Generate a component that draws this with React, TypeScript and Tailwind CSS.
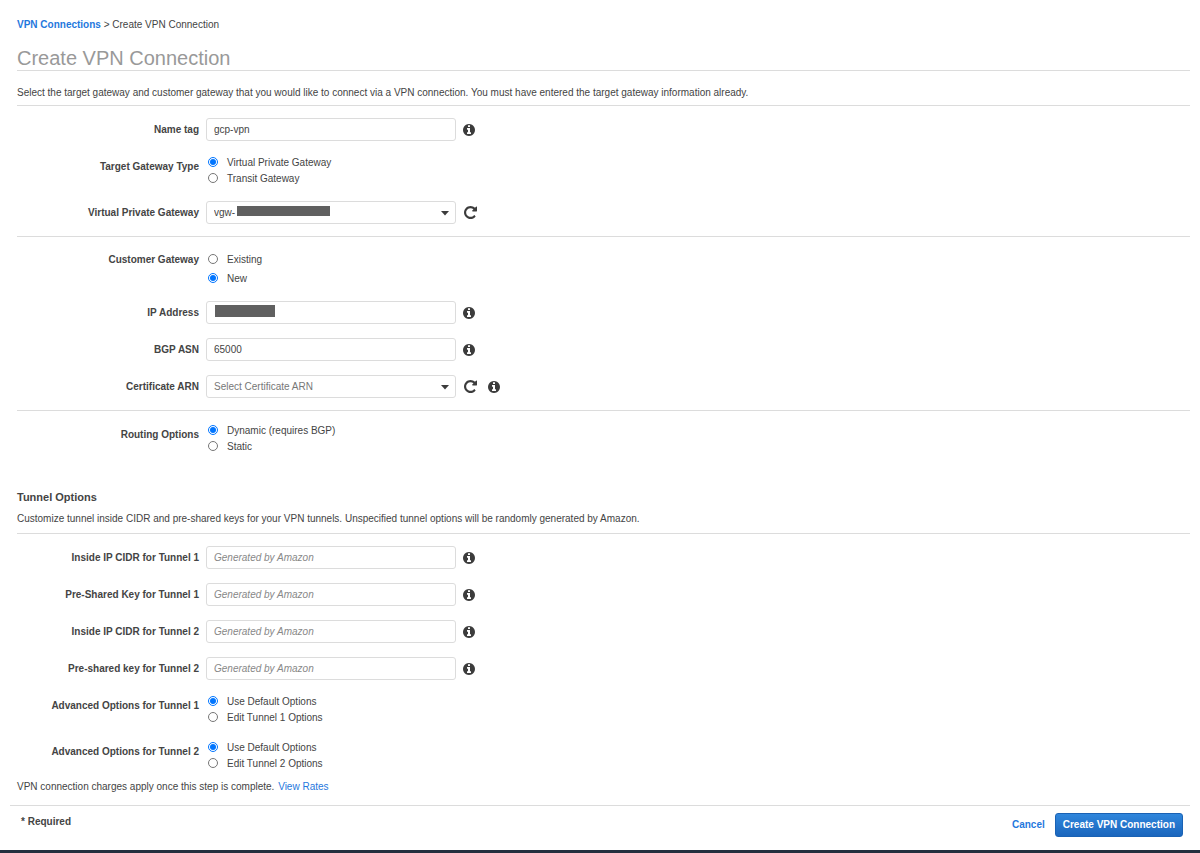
import React, { useState } from 'react'

interface RowProps {
  label: string;
  htmlFor: string;
  children: React.ReactNode;
}

interface RadioGroupProps {
  name: string;
  label: string;
  options: string[];
  initial: string;
  loose?: boolean;
}

interface TextRowProps {
  id: string;
  label: string;
  value?: string;
  placeholder?: string;
  redacted?: boolean;
}

interface SelectRowProps {
  id: string;
  label: string;
  option: string;
  muted?: boolean;
  redacted?: boolean;
  info?: boolean;
}

const fieldClass =
  'h-[23px] w-full rounded-[3px] border border-[#dcdcdc] bg-white px-[7px] text-[10px] outline-none focus:border-[#1f78dd] placeholder:italic placeholder:text-[#888]'

function InfoButton({ label }: { label: string }) {
  return (
    <button type="button" aria-label={`About ${label}`} className="text-[#3c3c3c]">
      <svg viewBox="0 128 1536 1536" className="size-3" fill="currentColor" aria-hidden="true">
        <path d="M1024 1376v-160q0-14-9-23t-23-9h-96v-512q0-14-9-23t-23-9h-320q-14 0-23 9t-9 23v160q0 14 9 23t23 9h96v320h-96q-14 0-23 9t-9 23v160q0 14 9 23t23 9h448q14 0 23-9t9-23zm-128-896v-160q0-14-9-23t-23-9h-192q-14 0-23 9t-9 23v160q0 14 9 23t23 9h192q14 0 23-9t9-23zm640 416q0 209-103 385.5t-279.5 279.5-385.5 103-385.5-103-279.5-279.5-103-385.5 103-385.5 279.5-279.5 385.5-103 385.5 103 279.5 279.5 103 385.5z" />
      </svg>
    </button>
  )
}

function RefreshButton({ label }: { label: string }) {
  return (
    <button type="button" aria-label={`Refresh ${label}`} className="ml-px mr-1 text-[#3c3c3c]">
      <svg viewBox="0 128 1536 1536" className="size-[13px]" fill="currentColor" aria-hidden="true">
        <path d="M1536 256v448q0 26-19 45t-45 19h-448q-42 0-59-40-17-39 14-69l138-138q-148-137-349-137-104 0-198.5 40.5t-163.5 109.5-109.5 163.5-40.5 198.5 40.5 198.5 109.5 163.5 163.5 109.5 198.5 40.5q119 0 225-52t179-147q7-10 23-12 14 0 25 9l137 138q9 8 9.5 20.5t-7.5 22.5q-109 132-264 204.5t-327 72.5q-156 0-298-61t-245-164-164-245-61-298 61-298 164-245 245-164 298-61q147 0 284.5 55.5t244.5 156.5l130-129q29-31 70-14 39 17 39 59z" />
      </svg>
    </button>
  )
}

function Row({ label, htmlFor, children }: RowProps) {
  return (
    <div className="flex items-center gap-[7px]">
      <label htmlFor={htmlFor} className="w-[182px] shrink-0 text-right font-bold">
        {label}
      </label>
      {children}
    </div>
  )
}

function TextRow({ id, label, value, placeholder, redacted }: TextRowProps) {
  return (
    <Row label={label} htmlFor={id}>
      <div className="relative w-[250px]">
        <input id={id} type="text" defaultValue={value} placeholder={placeholder} className={fieldClass} />
        {redacted && <span className="absolute left-[9px] top-1 h-3 w-[60px] bg-[#606060]" />}
      </div>
      <InfoButton label={label} />
    </Row>
  )
}

function SelectRow({ id, label, option, muted, redacted, info }: SelectRowProps) {
  return (
    <Row label={label} htmlFor={id}>
      <div className="relative w-[250px]">
        <select id={id} className={`${fieldClass} appearance-none ${muted ? 'text-[#777]' : ''}`}>
          <option>{option}</option>
        </select>
        {redacted && <span className="pointer-events-none absolute left-[31px] top-[5px] h-[10px] w-[93px] bg-[#606060]" />}
        <svg viewBox="0 0 8 5" className="pointer-events-none absolute right-[7px] top-[10px] h-[5px] w-2" fill="#3c3c3c" aria-hidden="true">
          <path d="M0 0h8L4 4.6z" />
        </svg>
      </div>
      <RefreshButton label={label} />
      {info && <InfoButton label={label} />}
    </Row>
  )
}

function RadioRow({ name, label, options, initial, loose }: RadioGroupProps) {
  const [selected, setSelected] = useState(initial)

  return (
    <div role="radiogroup" aria-labelledby={`${name}-label`} className="flex items-start gap-[9px]">
      <span id={`${name}-label`} className={`w-[182px] shrink-0 text-right font-bold ${loose ? '' : 'pt-1'}`}>
        {label}
      </span>
      <div className={`flex flex-col ${loose ? 'gap-[3px]' : ''}`}>
        {options.map((option) => (
          <label key={option} className="flex items-start gap-[9px]">
            <input
              type="radio"
              name={name}
              value={option}
              checked={selected === option}
              onChange={() => setSelected(option)}
              className="mt-[2px] size-[10px]"
            />
            {option}
          </label>
        ))}
      </div>
    </div>
  )
}

export default function App() {
  return (
    <div className="bg-white font-['Liberation_Sans',Arial,sans-serif] text-[10px] leading-4 text-[#444]">
      <main className="pl-[17px] pr-[10px] pt-[17px]">
        <nav>
          <a href="#connections" className="font-bold text-[#1f78dd]">VPN Connections</a> &gt; Create VPN Connection
        </nav>
        <h1 className="mt-[13px] border-b border-[#dcdcdc] text-[20px] leading-6 text-[#999]">Create VPN Connection</h1>
        <p className="mt-[14px] border-b border-[#dcdcdc] pb-1">
          Select the target gateway and customer gateway that you would like to connect via a VPN connection. You must have entered the target gateway information already.
        </p>

        <section className="flex flex-col gap-[14px] border-b border-[#dcdcdc] py-3">
          <TextRow id="name-tag" label="Name tag" value="gcp-vpn" />
          <RadioRow
            name="gateway-type"
            label="Target Gateway Type"
            options={['Virtual Private Gateway', 'Transit Gateway']}
            initial="Virtual Private Gateway"
          />
          <SelectRow id="vgw" label="Virtual Private Gateway" option="vgw-" redacted />
        </section>

        <section className="flex flex-col gap-[14px] border-b border-[#dcdcdc] pb-3 pt-[15px]">
          <RadioRow name="customer-gateway" label="Customer Gateway" options={['Existing', 'New']} initial="New" loose />
          <TextRow id="ip-address" label="IP Address" redacted />
          <TextRow id="bgp-asn" label="BGP ASN" value="65000" />
          <SelectRow id="certificate-arn" label="Certificate ARN" option="Select Certificate ARN" muted info />
        </section>

        <section className="pt-3">
          <RadioRow
            name="routing"
            label="Routing Options"
            options={['Dynamic (requires BGP)', 'Static']}
            initial="Dynamic (requires BGP)"
          />
        </section>

        <h2 className="mt-[34px] text-[11px] font-bold leading-4">Tunnel Options</h2>
        <p className="mt-[6px] border-b border-[#dcdcdc] pb-[6px]">
          Customize tunnel inside CIDR and pre-shared keys for your VPN tunnels. Unspecified tunnel options will be randomly generated by Amazon.
        </p>

        <section className="flex flex-col gap-[14px] pt-3">
          <TextRow id="cidr-1" label="Inside IP CIDR for Tunnel 1" placeholder="Generated by Amazon" />
          <TextRow id="psk-1" label="Pre-Shared Key for Tunnel 1" placeholder="Generated by Amazon" />
          <TextRow id="cidr-2" label="Inside IP CIDR for Tunnel 2" placeholder="Generated by Amazon" />
          <TextRow id="psk-2" label="Pre-shared key for Tunnel 2" placeholder="Generated by Amazon" />
          <RadioRow
            name="advanced-1"
            label="Advanced Options for Tunnel 1"
            options={['Use Default Options', 'Edit Tunnel 1 Options']}
            initial="Use Default Options"
          />
          <RadioRow
            name="advanced-2"
            label="Advanced Options for Tunnel 2"
            options={['Use Default Options', 'Edit Tunnel 2 Options']}
            initial="Use Default Options"
          />
        </section>

        <p className="mt-[7px]">
          VPN connection charges apply once this step is complete.{' '}
          <a href="#rates" className="ml-px text-[#1f78dd]">View Rates</a>
        </p>
      </main>

      <footer className="mx-[10px] mt-[10px] flex items-start justify-between border-t border-[#dcdcdc] pb-[13px] pl-[11px] pr-[7px] pt-[7px]">
        <p className="pt-px font-bold">* Required</p>
        <div className="flex items-center gap-[10px] font-bold">
          <button type="button" className="text-[#1f78dd]">Cancel</button>
          <button
            type="submit"
            className="h-6 rounded-[3px] border border-[#1a62b4] bg-linear-to-b from-[#2f86dc] to-[#1b66bd] px-[7px] text-white"
          >
            Create VPN Connection
          </button>
        </div>
      </footer>
      <div className="h-[3px] bg-[#232f3e]" />
    </div>
  )
}
